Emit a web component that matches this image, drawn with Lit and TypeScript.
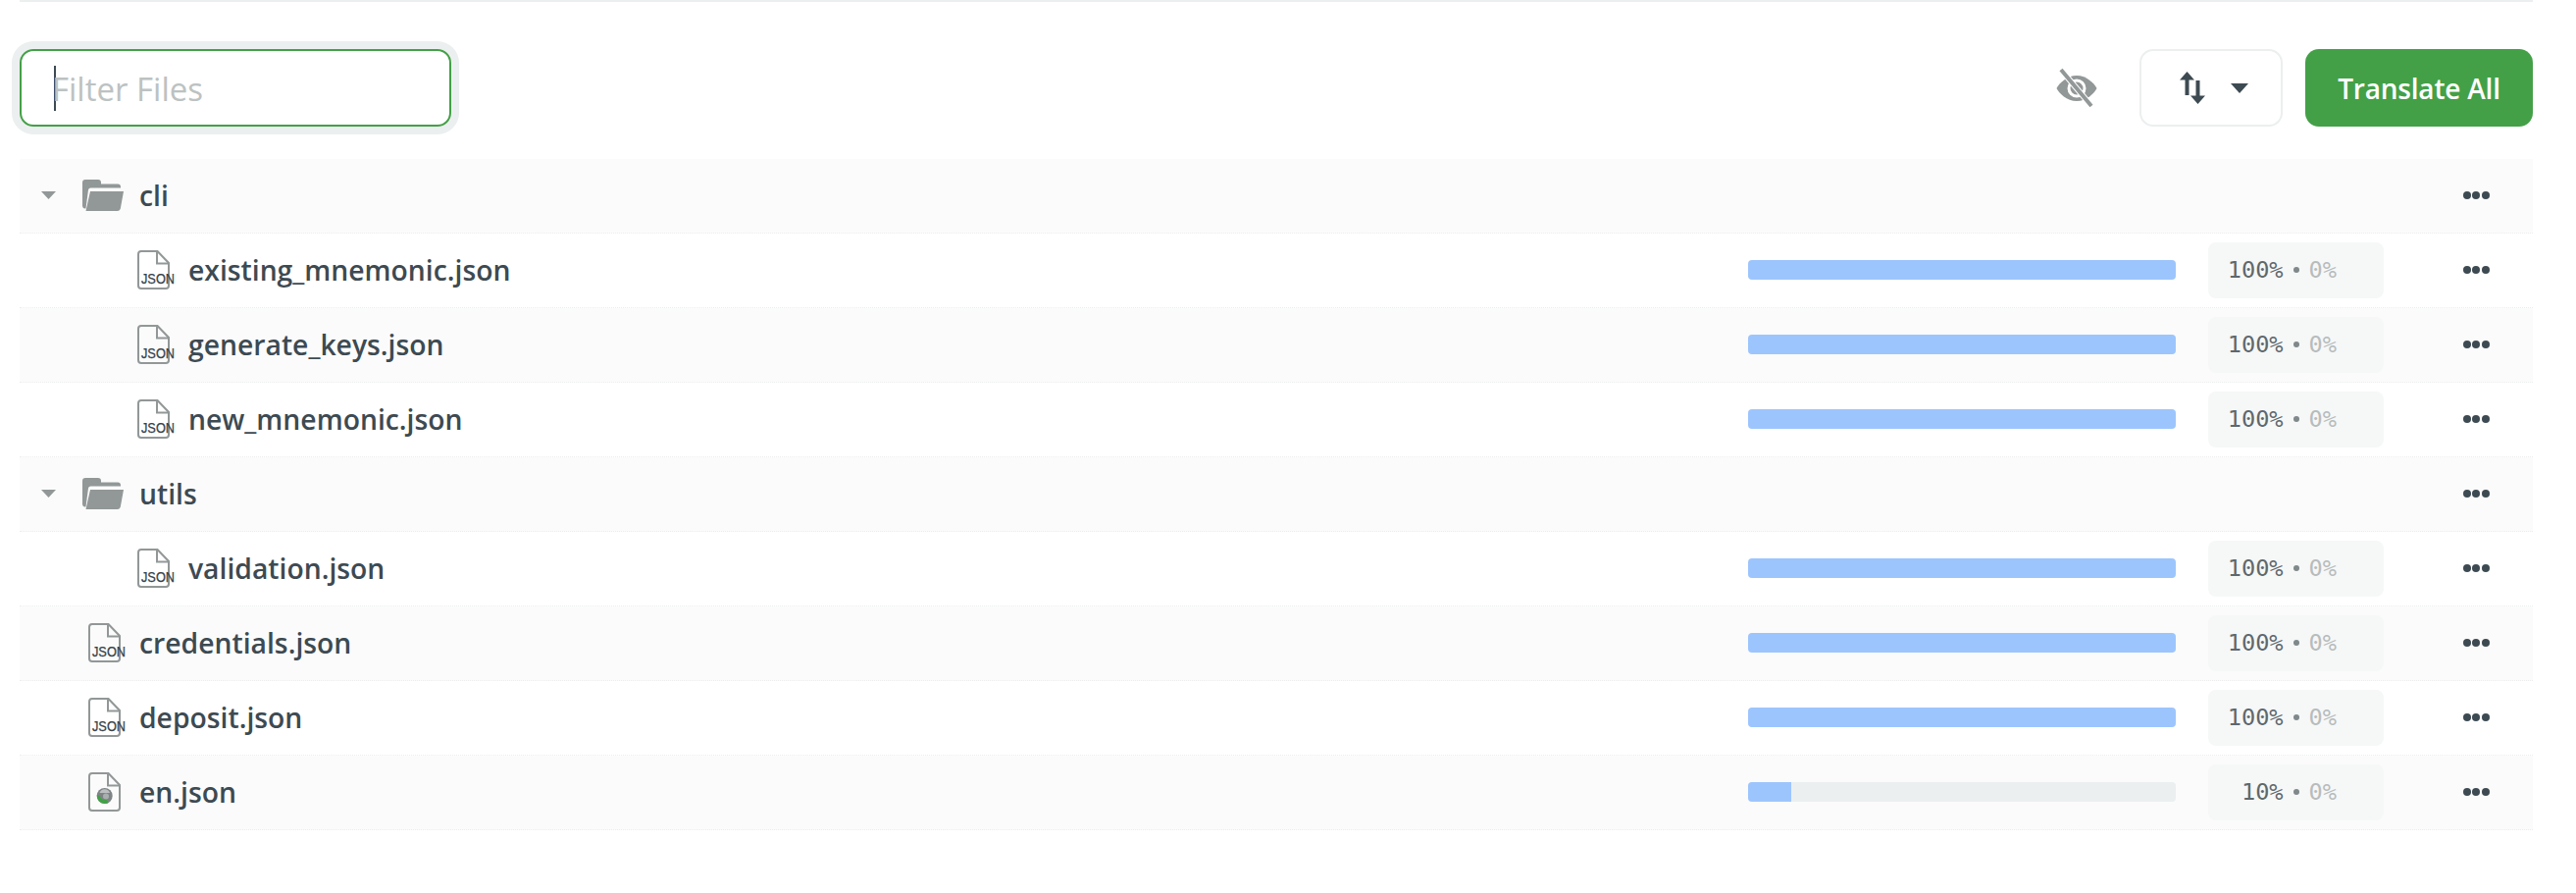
import { LitElement, html, css, svg } from "lit";
import { customElement } from "lit/decorators.js";

type Row = { name: string; level: number; kind: "folder" | "json" | "en"; pct?: number };

const ROWS: Row[] = [
  { name: "cli", level: 0, kind: "folder" },
  { name: "existing_mnemonic.json", level: 1, kind: "json", pct: 100 },
  { name: "generate_keys.json", level: 1, kind: "json", pct: 100 },
  { name: "new_mnemonic.json", level: 1, kind: "json", pct: 100 },
  { name: "utils", level: 0, kind: "folder" },
  { name: "validation.json", level: 1, kind: "json", pct: 100 },
  { name: "credentials.json", level: 0, kind: "json", pct: 100 },
  { name: "deposit.json", level: 0, kind: "json", pct: 100 },
  { name: "en.json", level: 0, kind: "en", pct: 10 },
];

const filePath = svg`<path d="M4 1h16.500L32 13v23a3 3 0 0 1-3 3H4a3 3 0 0 1-3-3V4a3 3 0 0 1 3-3z" fill="none" stroke="#929797" stroke-width="2"/><path d="M20 1.500V13.500H31.500" fill="none" stroke="#929797" stroke-width="2"/>`;

@customElement("app-root")
export class AppRoot extends LitElement {
  static styles = css`
    :host { display: block; font-family: "Open Sans", "Noto Sans", sans-serif; color: #3d4a52; background: #fff; }
    .page { padding: 0 44px 0 20px; height: 910px; box-sizing: border-box; }
    .topline { height: 2px; background: #ecefef; }
    .toolbar { display: flex; align-items: center; box-sizing: border-box; height: 160px; padding: 48px 0 33px; }
    .filter { width: 440px; height: 79px; box-sizing: border-box; border: 2px solid #43a047; border-radius: 14px; box-shadow: 0 0 0 8px #ecefef; display: flex; align-items: center; padding-left: 33px; font-size: 33px; color: #bcc2c2; }
    .caret { width: 2px; height: 46px; background: #3d4a52; margin-right: -4px; }
    .ph { padding-top: 2px; }
    .spacer { flex: 1; }
    .eye { width: 44px; height: 44px; margin-right: 42px; display: block; }
    .sort { width: 146px; height: 79px; box-sizing: border-box; border: 2px solid #ecefef; border-radius: 14px; display: flex; align-items: center; justify-content: center; gap: 26px; padding-left: 6px; margin-right: 23px; }
    .translate { width: 232px; height: 79px; border-radius: 14px; background: #43a047; color: #fff; font-size: 28px; letter-spacing: -0.2px; font-weight: 600; display: flex; align-items: center; justify-content: center; }
    .row { height: 76px; box-sizing: border-box; display: flex; align-items: center; border-bottom: 1px dotted #eceeee; padding-bottom: 1px; }
    .row:nth-child(odd) { background: #fbfbfb; }
    .tw { width: 64px; flex: none; display: flex; align-items: center; padding-left: 22px; box-sizing: border-box; }
    .indent { flex: none; }
    .ic { flex: none; display: block; }
    .name { font-size: 28.300px; font-weight: 550; flex: 1; white-space: nowrap; }
    .bar { width: 436px; height: 20px; border-radius: 4px; background: #ecefef; overflow: hidden; flex: none; margin-right: 33px; }
    .fill { height: 100%; background: #9dc5fd; }
    .badge { width: 179px; height: 57px; border-radius: 8px; background: #f6f7f7; flex: none; display: flex; align-items: center; justify-content: flex-end; padding-right: 48px; box-sizing: border-box; font-family: "DejaVu Sans Mono", "Liberation Mono", monospace; font-size: 23.600px; color: #5d686e; gap: 10px; }
    .dot { width: 6px; height: 6px; border-radius: 50%; background: #7f888a; }
    .zero { color: #b7bcbc; }
    .more { width: 152px; padding-left: 36px; box-sizing: border-box; flex: none; display: flex; justify-content: center; gap: 1.500px; }
    .more i { width: 8px; height: 8px; border-radius: 50%; background: #3d4a52; display: block; }
    .json { font-family: "Liberation Sans", sans-serif; font-size: 14px; fill: #37424a; stroke: #37424a; stroke-width: 0.25px; }
  `;

  private icon(kind: Row["kind"]) {
    if (kind === "folder")
      return html`<svg class="ic" width="42" height="32" viewBox="0 0 42 32">
        <path d="M3 0h13a3 3 0 0 1 3 3v1.500h17a3 3 0 0 1 3 3v1H8.500a2.500 2.500 0 0 0-2.500 2L3.500 29.500A3 3 0 0 1 0 27V3a3 3 0 0 1 3-3z" fill="#929797"/>
        <path d="M8 12h34l-3.200 17.500A3 3 0 0 1 36 32H3.500z" fill="#929797"/></svg>`;
    if (kind === "json")
      return html`<svg class="ic" width="40" height="40" viewBox="0 0 40 40">
        ${filePath}
        <text class="json" x="4" y="33.500" textLength="34" lengthAdjust="spacingAndGlyphs">JSON</text></svg>`;
    return html`<svg class="ic" width="40" height="40" viewBox="0 0 40 40">
      ${filePath}
      <circle cx="16.700" cy="24" r="8" fill="#7e8485"/>
      <path d="M8.800 23a8 8 0 0 0 7.900 9 8 8 0 0 0 4-1.100l-2.500-3.400c-2.500 1-5.500 0-6.300-3.500z" fill="#43a047"/>
      <path d="M11.500 21a5.500 5.500 0 0 1 10.500 0z" fill="#d5d8d8" opacity=".7"/>
      <circle cx="18" cy="24.500" r="3" fill="#a9aeae"/></svg>`;
  }

  private renderRow(r: Row) {
    const folder = r.kind === "folder";
    const indent = r.level * 50;
    return html`<div class="row">
      ${folder
        ? html`<div class="tw"><svg width="15" height="8" viewBox="0 0 15 8"><path d="M0 0h15l-7.500 8z" fill="#929797"/></svg></div>`
        : html`<div class="indent" style="width:${70 + indent}px"></div>`}
      ${this.icon(r.kind)}
      <div class="name" style="margin-left:${folder ? 16 : 12}px">${r.name}</div>
      ${r.pct !== undefined
        ? html`<div class="bar"><div class="fill" style="width:${r.pct}%"></div></div>
            <div class="badge"><span>${r.pct}%</span><span class="dot"></span><span class="zero">0%</span></div>`
        : ""}
      <div class="more"><i></i><i></i><i></i></div>
    </div>`;
  }

  render() {
    return html`<div class="page">
      <div class="topline"></div>
      <div class="toolbar">
        <div class="filter"><span class="caret"></span><span class="ph">Filter Files</span></div>
        <div class="spacer"></div>
        <svg class="eye" viewBox="0 0 44 44">
          <path d="M22 9C12 9 4 17 1.500 22 4 27 12 35 22 35s18-8 20.500-13C40 17 32 9 22 9z" fill="#929797"/>
          <circle cx="22" cy="22" r="8" fill="none" stroke="#fff" stroke-width="3"/>
          <path d="M6 3l31 37" stroke="#fff" stroke-width="6"/>
          <path d="M6 3l31 37" stroke="#929797" stroke-width="4"/>
        </svg>
        <div class="sort">
          <svg width="26" height="33" viewBox="0 0 26 33">
            <path d="M7.500 0L15 8.500H9.500V24h-4V8.500H0z" fill="#3d4a52"/>
            <path d="M18.500 33L11 24.500h5.500V9h4v15.500H26z" fill="#3d4a52"/>
          </svg>
          <svg width="18" height="10" viewBox="0 0 18 10"><path d="M0 0h18l-9 10z" fill="#3d4a52"/></svg>
        </div>
        <div class="translate">Translate All</div>
      </div>
      <div>${ROWS.map((r) => this.renderRow(r))}</div>
    </div>`;
  }
}
